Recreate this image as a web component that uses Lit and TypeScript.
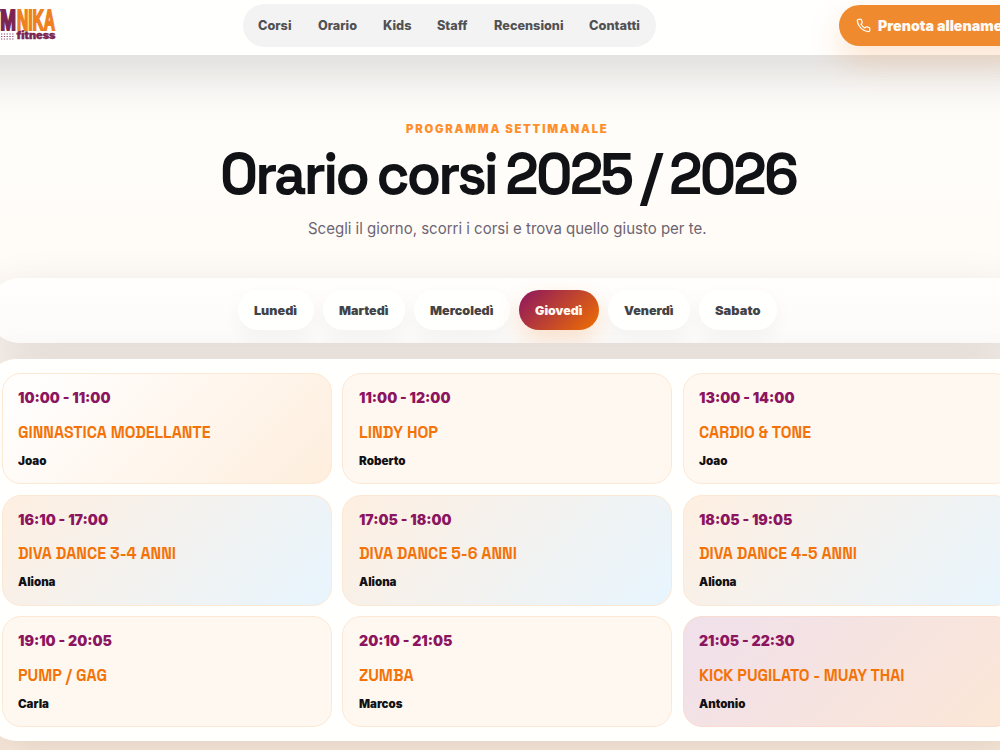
import { LitElement, html, css, svg } from "lit";
import { customElement, property } from "lit/decorators.js";
import { classMap } from "lit/directives/class-map.js";

interface Course {
  time: string;
  timeWidth: number;
  name: string;
  nameWidth: number;
  coach: string;
  coachWidth: number;
  tone: "plain" | "featured" | "kids" | "fight";
}

const NAV: [string, number][] = [
  ["Corsi", 33.5], ["Orario", 39], ["Kids", 28.5],
  ["Staff", 30.5], ["Recensioni", 69.5], ["Contatti", 51],
];
const DAYS: [string, number][] = [
  ["Lunedì", 43], ["Martedì", 49.5], ["Mercoledì", 63.5],
  ["Giovedì", 47.5], ["Venerdì", 49.5], ["Sabato", 45.5],
];
const COURSES: Course[] = [
  { time: "10:00 - 11:00", timeWidth: 92.5, name: "GINNASTICA MODELLANTE", nameWidth: 192.5, coach: "Joao", coachWidth: 28.5, tone: "featured" },
  { time: "11:00 - 12:00", timeWidth: 91.5, name: "LINDY HOP", nameWidth: 79, coach: "Roberto", coachWidth: 46.5, tone: "plain" },
  { time: "13:00 - 14:00", timeWidth: 95.5, name: "CARDIO & TONE", nameWidth: 112, coach: "Joao", coachWidth: 28.5, tone: "plain" },
  { time: "16:10 - 17:00", timeWidth: 90, name: "DIVA DANCE 3-4 ANNI", nameWidth: 158, coach: "Aliona", coachWidth: 37.5, tone: "kids" },
  { time: "17:05 - 18:00", timeWidth: 92.5, name: "DIVA DANCE 5-6 ANNI", nameWidth: 158, coach: "Aliona", coachWidth: 37.5, tone: "kids" },
  { time: "18:05 - 19:05", timeWidth: 93.5, name: "DIVA DANCE 4-5 ANNI", nameWidth: 158, coach: "Aliona", coachWidth: 37.5, tone: "kids" },
  { time: "19:10 - 20:05", timeWidth: 94, name: "PUMP / GAG", nameWidth: 89, coach: "Carla", coachWidth: 31, tone: "plain" },
  { time: "20:10 - 21:05", timeWidth: 93.5, name: "ZUMBA", nameWidth: 54.5, coach: "Marcos", coachWidth: 43.5, tone: "plain" },
  { time: "21:05 - 22:30", timeWidth: 95.5, name: "KICK PUGILATO - MUAY THAI", nameWidth: 205.5, coach: "Antonio", coachWidth: 46.5, tone: "fight" },
];

/** A single line of text drawn to a set advance width. */
@customElement("fit-text")
class FitText extends LitElement {
  @property() text = "";
  @property({ type: Number }) width = 0;
  @property({ type: Number }) size = 16;

  static styles = css`
    :host { display: block; }
    svg { display: block; overflow: visible; }
    text { fill: currentColor; font: inherit; letter-spacing: inherit; word-spacing: inherit; }
  `;

  render() {
    const h = Math.round(this.size * 1.25);
    return html`<svg width=${this.width} height=${h}>
      ${svg`<text x="0" y=${this.size} textLength=${this.width} lengthAdjust="spacingAndGlyphs">${this.text}</text>`}
    </svg>`;
  }
}

@customElement("course-card")
class CourseCard extends LitElement {
  @property({ attribute: false }) course!: Course;

  static styles = css`
    :host { display: block; }
    .card {
      box-sizing: border-box;
      height: 111px;
      padding: 15.5px 15.3px 0;
      border: 1px solid #fde8d4;
      border-radius: 19px;
      background: #fff8f1;
    }
    .featured { background: linear-gradient(135deg, #fffefd 8%, #fff6ed 55%, #feeedd); }
    .kids { background: linear-gradient(135deg, #feefe1, #e8f5fe); }
    .fight { background: linear-gradient(135deg, #f0e0eb, #fce7d6); border-color: #f9dccf; }
    .time { color: #8c1560; font: 900 14px Inter, sans-serif; margin-top: -0.5px; }
    .name { color: #f37309; font: 700 16.6px "Space Grotesk", Inter, sans-serif; margin-top: 14.7px; }
    .coach { color: #111216; font: 900 11.3px Inter, sans-serif; margin-top: 12.3px; }
  `;

  render() {
    const c = this.course;
    return html`<article class="card ${c.tone}">
      <fit-text class="time" .text=${c.time} .width=${c.timeWidth} .size=${14}></fit-text>
      <fit-text class="name" .text=${c.name} .width=${c.nameWidth} .size=${16}></fit-text>
      <fit-text class="coach" .text=${c.coach} .width=${c.coachWidth} .size=${11.3}></fit-text>
    </article>`;
  }
}

@customElement("app-root")
class AppRoot extends LitElement {
  static styles = css`
    :host {
      display: block;
      width: 1000px;
      height: 750px;
      overflow: hidden;
      font-family: Inter, sans-serif;
      background: linear-gradient(180deg, #fffefc 0, #fffcf8 240px, #fef6ef 350px, #ffefdf 750px);
    }
    .page { display: flex; flex-direction: column; width: 1039px; margin-left: -12px; }
    .header {
      display: flex;
      box-sizing: border-box;
      height: 55px;
      margin: 0 -60px;
      padding: 4px 0 0 72px;
      background: #fffffe;
      box-shadow: 0 18px 50px rgba(17, 18, 22, 0.16);
    }
    .logo { display: block; flex: none; width: 56px; height: 40px; margin-top: 2px; overflow: hidden; }
    .nav {
      display: flex;
      flex: none;
      gap: 26px;
      align-items: center;
      box-sizing: border-box;
      width: 413.5px;
      height: 43px;
      margin-left: 186.5px;
      padding: 0 0 1.5px 15.5px;
      border-radius: 22px;
      background: #f3f3f3;
      color: #515153;
      font-weight: 800;
      font-size: 12.5px;
    }
    .cta {
      display: flex;
      align-items: center;
      gap: 7px;
      box-sizing: border-box;
      width: 200px;
      height: 40.5px;
      flex: none;
      margin: 1px 0 0 183px;
      padding-left: 16.5px;
      border-radius: 21px;
      background: #ef8a2f;
      color: #fffaf3;
      font: 900 14.2px Inter, sans-serif;
      box-shadow: 0 14px 34px rgba(240, 117, 16, 0.2);
    }
    .cta fit-text { padding-top: 1px; }
    .phone { flex: none; display: block; }
    .hero { display: flex; flex-direction: column; align-items: center; height: 222.5px; }
    .eyebrow {
      margin: 66px 0 0 0;
      color: #ff8f2b;
      font-weight: 900;
      font-size: 11.3px;
      letter-spacing: 1.8px;
    }
    .title {
      color: #111216;
      font: 600 58px "Space Grotesk", Inter, sans-serif;
      letter-spacing: -2.9px;
      word-spacing: -2.2px;
      padding-left: 1px;
      margin-top: 1px;
    }
    .lead { margin-top: 10.5px; color: #6d6472; font-weight: 400; font-size: 15.6px; }
    .days {
      display: flex;
      justify-content: center;
      align-items: center;
      gap: 9px;
      height: 65.5px;
      overflow: hidden;
      border-radius: 32px;
      background: linear-gradient(180deg, #fffefc, #fcfbfa);
      box-shadow: 0 18px 50px rgba(17, 18, 22, 0.12);
    }
    .day {
      display: flex;
      align-items: center;
      height: 40px;
      padding: 0 16.3px;
      border-radius: 20px;
      background: #fffffe;
      color: #434346;
      font: 900 12.2px Inter, sans-serif;
      box-shadow: 0 8px 20px rgba(17, 18, 22, 0.04);
    }
    .active {
      background: linear-gradient(135deg, #8c1560, #f07000);
      color: #fff7f2;
      box-shadow: 0 10px 24px rgba(240, 117, 16, 0.2);
    }
    .panel {
      display: grid;
      grid-template-columns: repeat(3, 330px);
      gap: 10.5px;
      box-sizing: border-box;
      height: 382px;
      margin-top: 16px;
      padding: 14px 14px 0 13.9px;
      border-radius: 28px;
      align-content: start;
      background: #fffffe;
      box-shadow: 0 18px 50px rgba(17, 18, 22, 0.13);
    }
  `;

  render() {
    return html`<div class="page">
      <header class="header">
        <svg class="logo" viewBox="0 0 56 40">
          <g font-family="Liberation Sans Narrow, Liberation Sans" font-weight="700" font-size="29" stroke-width="2">
            <text x="-27" y="24.3" fill="#7b2452" stroke="#7b2452" textLength="43" lengthAdjust="spacingAndGlyphs">GYM</text>
            <text x="17" y="24.3" fill="#ee8020" stroke="#ee8020" textLength="38" lengthAdjust="spacingAndGlyphs">NIKA</text>
          </g>
          <text x="16.5" y="33" font-family="Inter" font-weight="900" font-size="9.6" fill="#7b2452" stroke="#7b2452" stroke-width=".4" textLength="39" lengthAdjust="spacingAndGlyphs">fitness</text>
          <path d="M1 28h14M1 30.5h14M1 33h14" stroke="#8d4a70" stroke-width="1.2" stroke-dasharray="1.3 1.5" />
        </svg>
        <nav class="nav">
          ${NAV.map(([t, w]) => html`<fit-text .text=${t} .width=${w} .size=${12.5}></fit-text>`)}
        </nav>
        <div class="cta">
          <svg class="phone" width="15" height="15" viewBox="0 0 24 24" fill="none" stroke="currentColor" stroke-width="2" stroke-linecap="round" stroke-linejoin="round">
            <path d="M22 16.92v3a2 2 0 0 1-2.18 2 19.79 19.79 0 0 1-8.63-3.07 19.5 19.5 0 0 1-6-6 19.79 19.79 0 0 1-3.07-8.67A2 2 0 0 1 4.11 2h3a2 2 0 0 1 2 1.72 12.84 12.84 0 0 0 .7 2.81 2 2 0 0 1-.45 2.11L8.09 9.91a16 16 0 0 0 6 6l1.27-1.27a2 2 0 0 1 2.11-.45 12.84 12.84 0 0 0 2.81.7A2 2 0 0 1 22 16.92z" />
          </svg>
          <fit-text .text=${"Prenota allenamento"} .width=${148} .size=${14.2}></fit-text>
        </div>
      </header>
      <section class="hero">
        <fit-text class="eyebrow" .text=${"PROGRAMMA SETTIMANALE"} .width=${202.5} .size=${11.6}></fit-text>
        <fit-text class="title" .text=${"Orario corsi 2025 / 2026"} .width=${576} .size=${57}></fit-text>
        <fit-text class="lead" .text=${"Scegli il giorno, scorri i corsi e trova quello giusto per te."} .width=${398.5} .size=${15.4}></fit-text>
      </section>
      <div class="days">
        ${DAYS.map(([t, w]) => html`<div class=${classMap({ day: true, active: t === "Giovedì" })}>
          <fit-text .text=${t} .width=${w} .size=${12.6}></fit-text>
        </div>`)}
      </div>
      <section class="panel">
        ${COURSES.map((c) => html`<course-card .course=${c}></course-card>`)}
      </section>
    </div>`;
  }
}
